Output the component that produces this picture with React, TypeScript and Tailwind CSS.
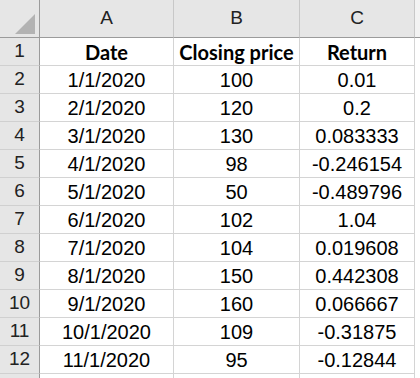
const rows: [string, string, string][] = [
  ["1/1/2020", "100", "0.01"],
  ["2/1/2020", "120", "0.2"],
  ["3/1/2020", "130", "0.083333"],
  ["4/1/2020", "98", "-0.246154"],
  ["5/1/2020", "50", "-0.489796"],
  ["6/1/2020", "102", "1.04"],
  ["7/1/2020", "104", "0.019608"],
  ["8/1/2020", "150", "0.442308"],
  ["9/1/2020", "160", "0.066667"],
  ["10/1/2020", "109", "-0.31875"],
  ["11/1/2020", "95", "-0.12844"],
];

const cell =
  "flex items-center justify-center whitespace-nowrap border-r border-b border-[#d4d4d4] bg-white text-[20px] text-black";
const bold = " font-bold text-[19px] font-['Lato',_sans-serif]";
const rowHead =
  "flex items-center justify-center border-r border-b border-r-[#9b9b9b] border-b-[#d0d0d0] bg-[#e6e6e6] text-[19px] text-[#222]";
const colHead =
  "flex items-end justify-center pb-[5px] border-r border-b border-r-[#c8c8c8] border-b-[#9b9b9b] bg-[#e6e6e6] text-[19px] text-[#222]";

export default function App() {
  return (
    <div
      className="grid h-[378px] w-[420px] overflow-hidden bg-white grid-cols-[40px_134px_126px_115px_5px] grid-rows-[38px_repeat(12,28px)_4px]"
      style={{ fontFamily: '"Liberation Sans", Arial, sans-serif' }}
    >
      {/* corner */}
      <div className="flex items-end justify-end border-r border-b border-r-[#9b9b9b] border-b-[#9b9b9b] bg-[#e6e6e6] pr-[4px] pb-[3px]">
        <svg width="20" height="20" viewBox="0 0 20 20">
          <polygon points="20,0 20,20 0,20" fill="#b3b3b3" />
        </svg>
      </div>
      <div className={colHead}>A</div>
      <div className={colHead}>B</div>
      <div className={colHead}>C</div>
      <div className="border-b border-b-[#9b9b9b] bg-[#f3f3f3]" />

      <div className={rowHead}>1</div>
      <div className={cell + bold}>Date</div>
      <div className={cell + bold}>Closing price</div>
      <div className={cell + bold}>Return</div>
      <div className="bg-white" />

      {rows.map((r, i) => (
        <div key={i} className="contents">
          <div className={rowHead}>{i + 2}</div>
          <div className={cell}>{r[0]}</div>
          <div className={cell}>{r[1]}</div>
          <div className={cell}>{r[2]}</div>
          <div className="bg-white" />
        </div>
      ))}

      <div className="border-r border-r-[#9b9b9b] bg-[#e6e6e6]" />
      <div className="border-r border-[#d4d4d4] bg-white" />
      <div className="border-r border-[#d4d4d4] bg-white" />
      <div className="border-r border-[#d4d4d4] bg-white" />
      <div className="bg-white" />
    </div>
  );
}
